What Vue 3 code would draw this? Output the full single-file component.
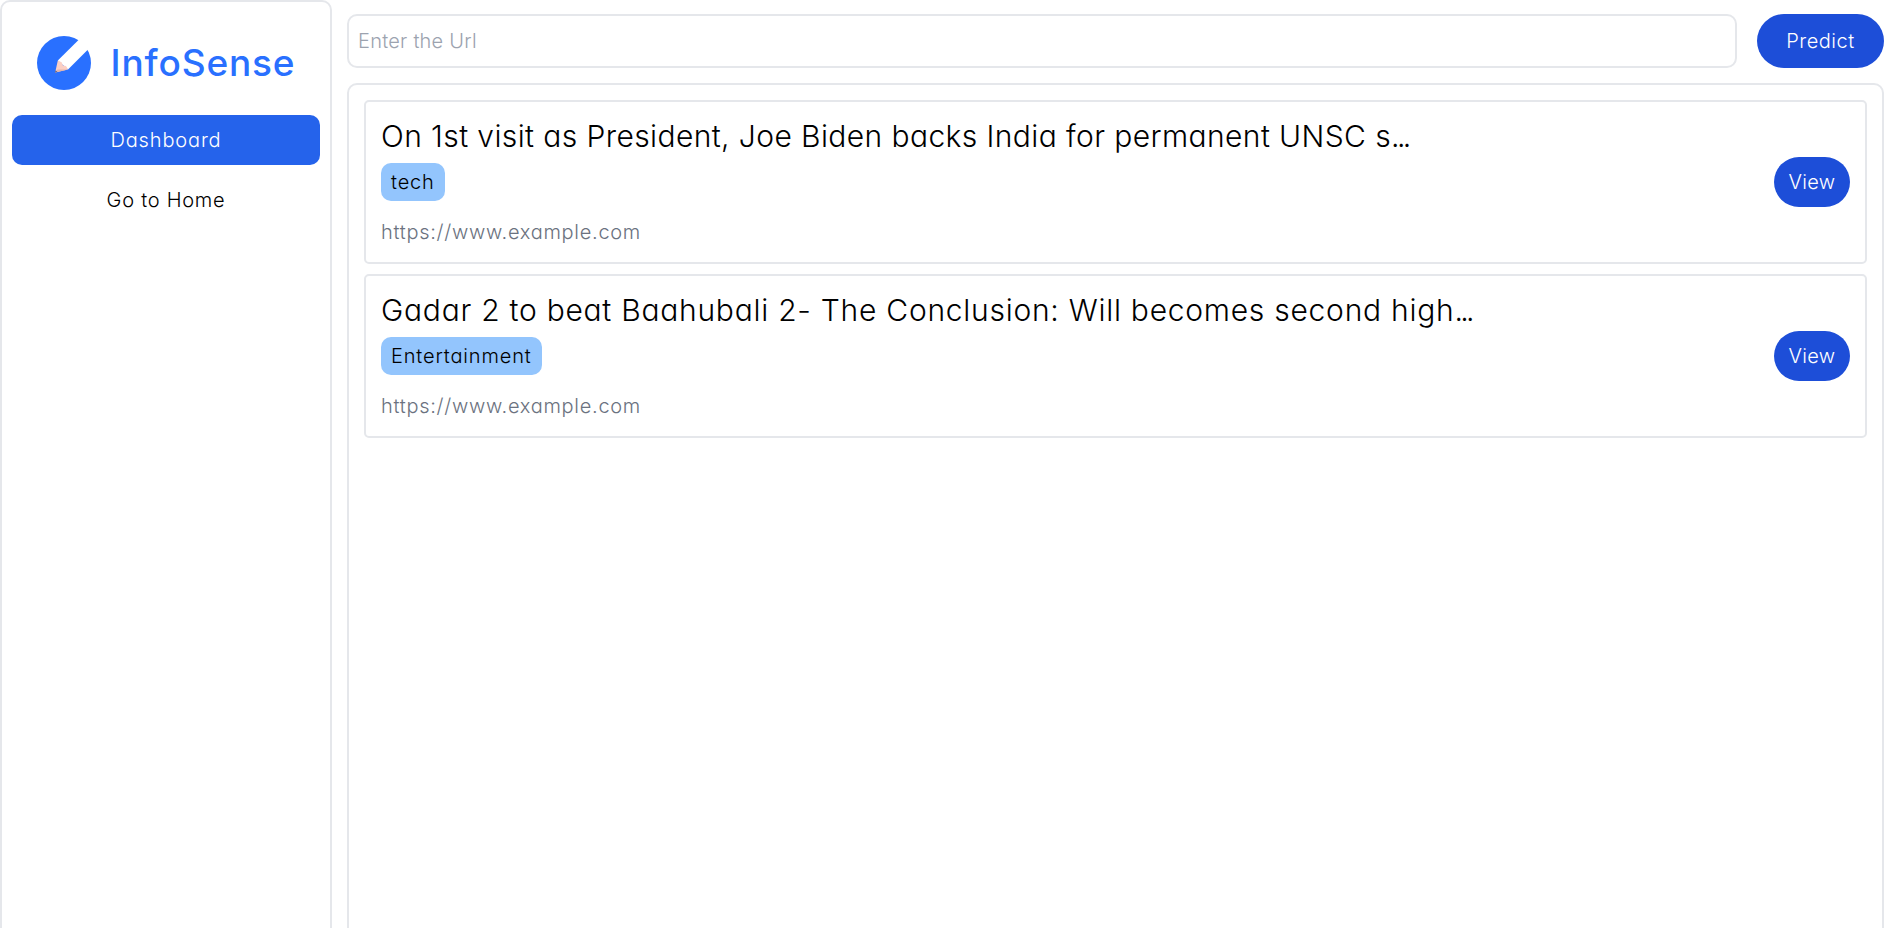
<script setup>
const articles = [
  {
    title: 'On 1st visit as President, Joe Biden backs India for permanent UNSC s',
    tag: 'tech',
    url: 'https://www.example.com',
    key: 'biden',
  },
  {
    title: 'Gadar 2 to beat Baahubali 2- The Conclusion: Will becomes second high',
    tag: 'Entertainment',
    url: 'https://www.example.com',
    key: 'gadar',
  },
]
</script>

<template>
  <div class="page">
    <aside class="sidebar">
      <div class="brand">
        <svg class="logo" viewBox="0 0 54 54" width="54" height="54">
          <circle cx="27" cy="27" r="27" fill="#2970ff" />
          <path d="M20.8 24.6 L41 4.4 L46 0 L56 8 L51 13.4 L31 33.4 Z" fill="#fff" />
          <path d="M20.8 24.6 L18.2 36.4 L31 33.6 L29 30 L26 29.6 L24.6 26.2 Z" fill="#fbcfc4" />
          <path d="M20.5 33.5 L31 33.5 L18.2 36.4 Z" fill="#e3b5ab" />
          <path d="M18.7 34.2 L18 36.5 L20.4 35.9 Z" fill="#5b5f80" />
        </svg>
        <span class="name">InfoSense</span>
      </div>
      <nav>
        <a class="item active"><span class="dash">Dashboard</span></a>
        <a class="item"><span class="home">Go to Home</span></a>
      </nav>
    </aside>
    <main class="main">
      <div class="search">
        <input class="field" type="text" placeholder="Enter the Url" />
        <button class="btn predict">Predict</button>
      </div>
      <section class="panel">
        <article v-for="a in articles" :key="a.key" class="card">
          <div class="info">
            <h2 class="title" :class="a.key">{{ a.title }}<span class="dots">...</span></h2>
            <span class="tag" :class="a.key">{{ a.tag }}</span>
            <p class="url">{{ a.url }}</p>
          </div>
          <button class="btn view">View</button>
        </article>
      </section>
    </main>
  </div>
</template>

<style>
body { background: #fff; overflow: hidden; }
</style>

<style scoped>
* { box-sizing: border-box; }
.page {
  display: flex;
  gap: 15px;
  height: 928px;
  overflow: hidden;
  font-family: Inter, "Noto Sans", sans-serif;
  font-feature-settings: "cv11";
  font-weight: 260;
  font-size: 20px;
  line-height: 30px;
  color: #000;
}
.sidebar {
  flex: none;
  width: 332px;
  height: 960px;
  border: 2px solid #e5e7eb;
  border-radius: 10px;
  padding: 34px 10px 0;
}
.brand { display: flex; align-items: center; padding-left: 25px; height: 54px; }
.logo { flex: none; }
.name {
  margin-left: 19.5px;
  font-size: 37px;
  font-weight: 500;
  line-height: 54px;
  letter-spacing: 0.85px;
  color: #2970ff;
  white-space: nowrap;
}
nav { display: flex; flex-direction: column; gap: 10px; margin-top: 25px; }
.item {
  display: flex;
  justify-content: center;
  padding: 10px;
  height: 50px;
  border-radius: 10px;
  white-space: nowrap;
}
.dash { letter-spacing: 0.85px; }
.home { letter-spacing: 0.75px; }
.active { background: #2563eb; color: #fff; }
.main { flex: 1; min-width: 0; padding: 14px 11px 0 0; }
.search { display: flex; gap: 20px; height: 54px; }
.field {
  flex: 1;
  min-width: 0;
  border: 2px solid #e5e7eb;
  border-radius: 10px;
  padding: 0 9px;
  font: inherit;
  font-feature-settings: inherit;
  letter-spacing: 0.25px;
  outline: none;
  background: #fff;
}
.field::placeholder { color: #9ca3af; opacity: 1; }
.btn {
  flex: none;
  border: 0;
  padding: 0;
  font: inherit;
  color: #fff;
  background: #1d4ed8;
  border-radius: 27px;
}
.predict { width: 127px; letter-spacing: 0.5px; }
.view { width: 76px; height: 50px; border-radius: 25px; letter-spacing: 0.3px; }
.panel {
  margin-top: 15px;
  height: 900px;
  border: 2px solid #e5e7eb;
  border-radius: 10px;
  padding: 15px;
  display: flex;
  flex-direction: column;
  gap: 10px;
}
.card {
  flex: none;
  display: flex;
  justify-content: space-between;
  align-items: center;
  height: 164px;
  border: 2px solid #e5e7eb;
  border-radius: 5px;
  padding: 15px;
}
.info { display: flex; flex-direction: column; align-items: flex-start; height: 130px; }
.title {
  margin: 0;
  padding-bottom: 7px;
  font-size: 30px;
  line-height: 39px;
  font-weight: 260;
  white-space: nowrap;
}
.title.biden { letter-spacing: 0.4px; }
.title.gadar { letter-spacing: 0.74px; }
.dots { letter-spacing: -2.6px; }
.tag {
  background: #93c5fd;
  border-radius: 10px;
  height: 38px;
  padding: 4px 10px;
  letter-spacing: 0.85px;
  white-space: nowrap;
}
.url { margin: 16px 0 0; color: #6b7280; letter-spacing: 0.72px; }
</style>
